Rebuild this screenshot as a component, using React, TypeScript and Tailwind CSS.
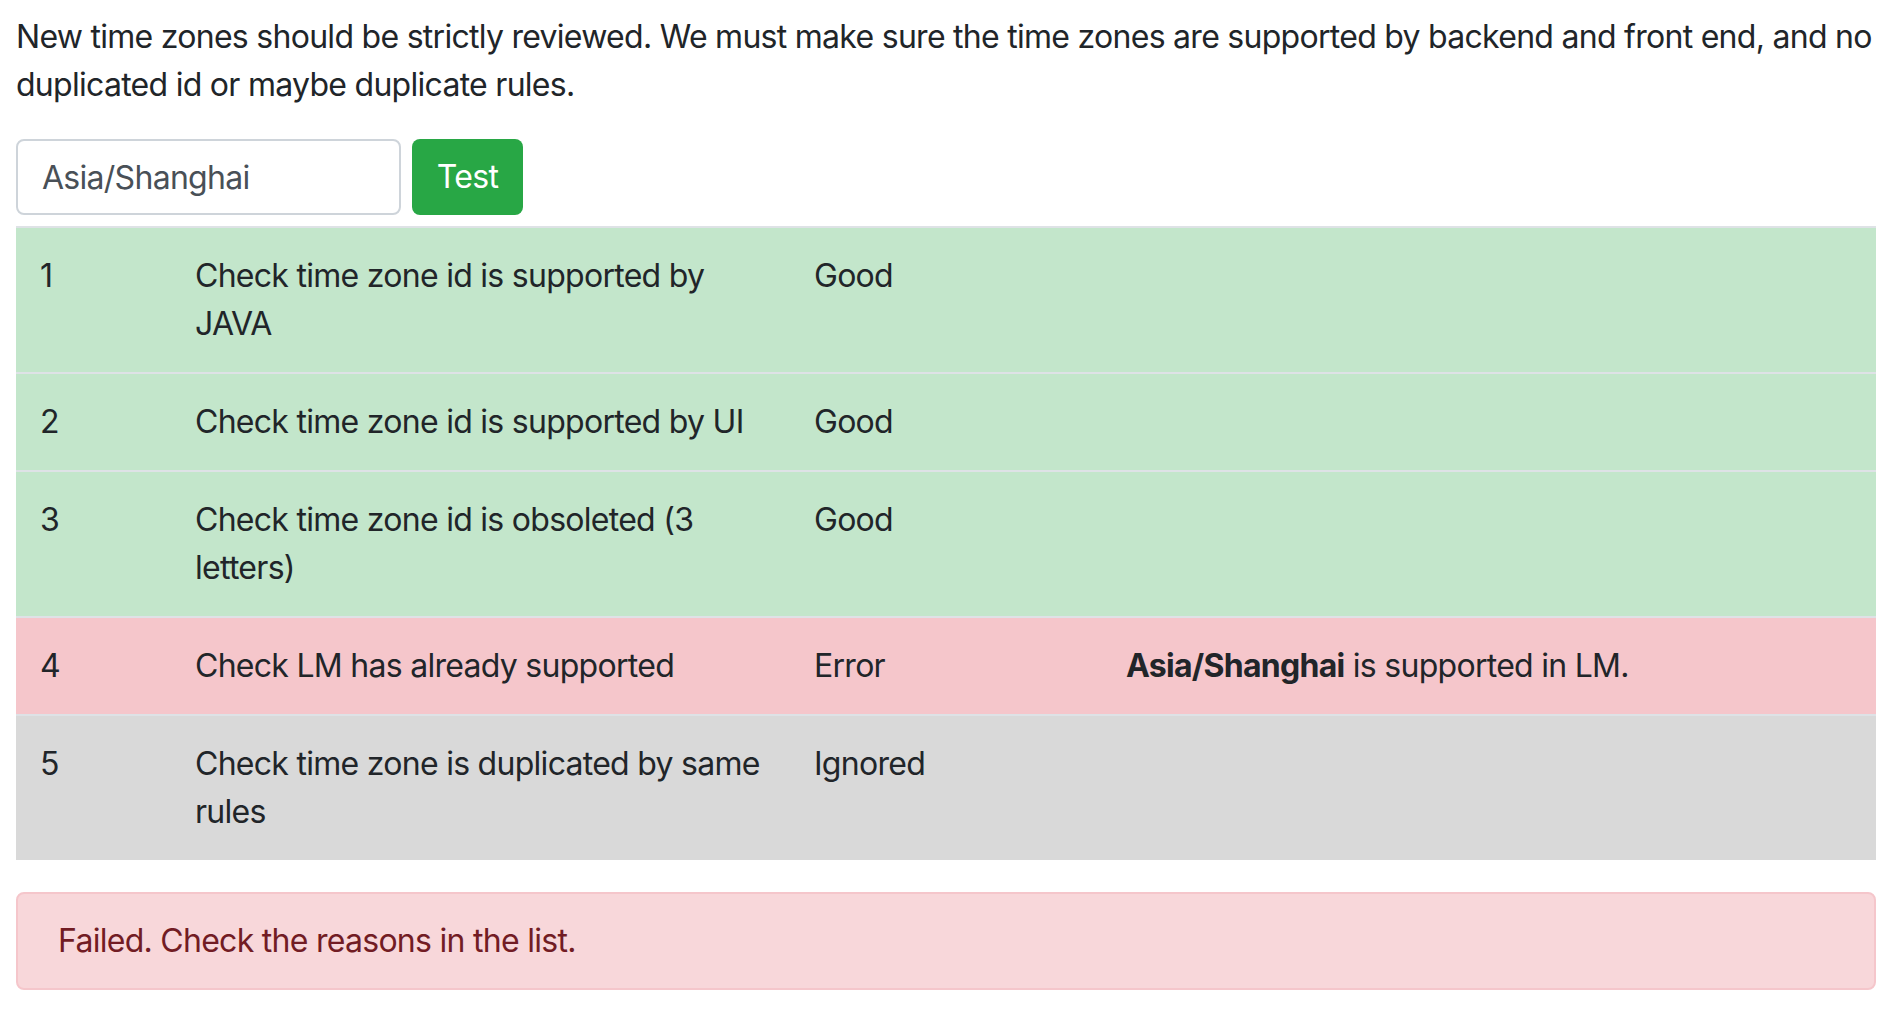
import { useState } from "react";

type Check = {
  id: number;
  name: string;
  status: "Good" | "Error" | "Ignored";
  message?: React.ReactNode;
};

const rowBg: Record<Check["status"], string> = {
  Good: "bg-[#c3e6cb]",
  Error: "bg-[#f5c6cb]",
  Ignored: "bg-[#d9d9d9]",
};

export default function App() {
  const [zone, setZone] = useState("Asia/Shanghai");

  const checks: Check[] = [
    { id: 1, name: "Check time zone id is supported by JAVA", status: "Good" },
    { id: 2, name: "Check time zone id is supported by UI", status: "Good" },
    { id: 3, name: "Check time zone id is obsoleted (3 letters)", status: "Good" },
    {
      id: 4,
      name: "Check LM has already supported",
      status: "Error",
      message: (
        <>
          <b className="font-bold">{zone}</b> is supported in LM.
        </>
      ),
    },
    { id: 5, name: "Check time zone is duplicated by same rules", status: "Ignored" },
  ];

  return (
    <div className="min-h-screen bg-white pl-[16px] pr-[18px] pt-[13px] font-['Inter','Liberation_Sans',sans-serif] text-[32px] leading-[48px] tracking-[-0.72px] text-[#212529]">
      <p className="mb-[30px]">
        New time zones should be strictly reviewed. We must make sure the time zones are supported by backend and
        front end, and no duplicated id or maybe duplicate rules.
      </p>

      <div className="mb-[11px] flex items-center gap-[11px]">
        <input
          value={zone}
          onChange={(e) => setZone(e.target.value)}
          className="h-[76px] w-[385px] rounded-[8px] border-2 border-[#ced4da] bg-white px-[24px] text-[32px] tracking-[-0.72px] text-[#495057] outline-none"
        />
        <button
          type="button"
          className="h-[76px] w-[111px] rounded-[8px] bg-[#28a745] text-[32px] tracking-[-0.72px] text-white"
        >
          Test
        </button>
      </div>

      <table className="mb-[32px] w-full table-fixed border-collapse">
        <colgroup>
          <col className="w-[155px]" />
          <col className="w-[619px]" />
          <col className="w-[312px]" />
          <col />
        </colgroup>
        <tbody>
          {checks.map((c) => (
            <tr key={c.id} className={rowBg[c.status]}>
              <td className="border-t-2 border-[#dee2e6] p-[24px] align-top">{c.id}</td>
              <td className="border-t-2 border-[#dee2e6] p-[24px] align-top">{c.name}</td>
              <td className="border-t-2 border-[#dee2e6] p-[24px] align-top">{c.status}</td>
              <td className="border-t-2 border-[#dee2e6] p-[24px] align-top">{c.message}</td>
            </tr>
          ))}
        </tbody>
      </table>

      <div className="rounded-[8px] border-2 border-[#f5c6cb] bg-[#f8d7da] px-[40px] py-[23px] text-[#721c24]">
        Failed. Check the reasons in the list.
      </div>
    </div>
  );
}
